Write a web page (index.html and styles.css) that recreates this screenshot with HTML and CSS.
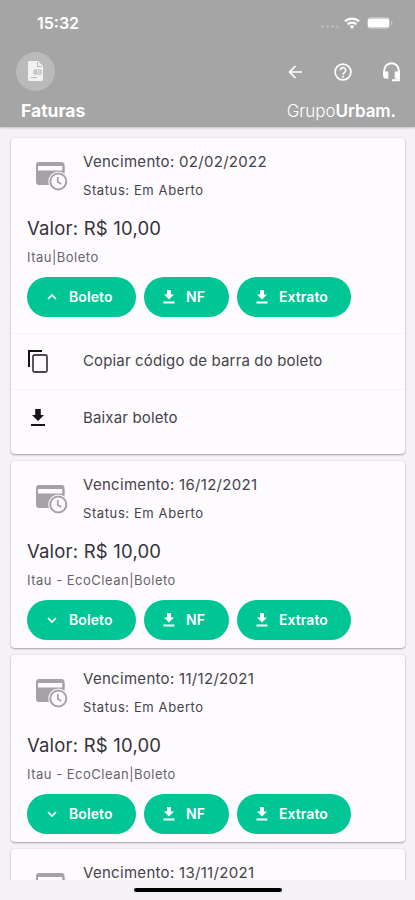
FILE: index.html
```html
<!DOCTYPE html>
<html lang="pt-BR">
<head>
<meta charset="utf-8">
<meta name="viewport" content="width=device-width, initial-scale=1">
<title>Faturas</title>
<link rel="stylesheet" href="styles.css">
</head>
<body>
<svg class="defs" aria-hidden="true">
  <symbol id="download" viewBox="0 0 12 14"><path d="M4 0h4v4.500h3L6 9.500 1 4.500h3zM.5 11.500h11v2H.5z"/></symbol>
  <symbol id="up" viewBox="0 0 10 6"><path d="M1 5l4-4 4 4" fill="none" stroke="currentColor" stroke-width="1.700"/></symbol>
  <symbol id="down" viewBox="0 0 10 6"><path d="M1 1l4 4 4-4" fill="none" stroke="currentColor" stroke-width="1.700"/></symbol>
  <symbol id="pending" viewBox="0 0 32 30"><path fill-rule="evenodd" d="M3 0h22.500a3 3 0 0 1 3 3v20H3a3 3 0 0 1-3-3V3a3 3 0 0 1 3-3zM2 4v4.500H26.500V4z"/><circle cx="22.300" cy="19.500" r="10" class="halo"/><path d="M26.500 4h2v5.500h-2z"/><circle cx="22.300" cy="19.500" r="8" class="ring"/><path d="M21.800 15v5l3.500 2" fill="none" stroke="currentColor" stroke-width="1.700"/></symbol>
</svg>
<div class="screen">
  <header class="header">
    <div class="status-bar">
      <span class="time">15:32</span>
      <span class="dots"><i></i><i></i><i></i><i></i></span>
      <svg class="wifi" viewBox="0 0 16 12"><g fill="none" stroke="currentColor" stroke-width="2.200"><path d="M1 4.400a10 10 0 0 1 14 0M3.700 7.400a6.200 6.200 0 0 1 8.600 0"/></g><path d="M5.600 9.300a3.500 3.500 0 0 1 4.800 0L8 12z"/></svg>
      <svg class="battery" viewBox="0 0 26 12"><rect x=".5" y=".5" width="22" height="11" rx="3" fill="none" stroke="currentColor" opacity=".3"/><rect x="1" y="1.500" width="21" height="9" rx="1.500"/><path d="M24 4c2 .7 2 3.300 0 4z" opacity=".4"/></svg>
    </div>
    <div class="toolbar">
      <span class="avatar"><svg viewBox="0 0 15 20"><path d="M1.500 0H10l5 5v13.500a1.500 1.500 0 0 1-1.500 1.500h-12A1.500 1.500 0 0 1 0 18.500v-17A1.500 1.500 0 0 1 1.500 0z"/><path d="M9.500 1v4.500H14M6 9h7v4H6zM2.500 16.500H9M8 9v4M6 11h7" fill="none" stroke="#b8b8b8"/></svg></span>
      <svg class="back" viewBox="0 0 14 14"><path d="M14 7H1.500M7.500 1l-6 6 6 6" fill="none" stroke="currentColor" stroke-width="1.700"/></svg>
      <svg class="help" viewBox="0 0 18 18"><circle cx="9" cy="9" r="7.900" fill="none" stroke="currentColor" stroke-width="1.700"/><path d="M6.300 7.300a2.700 2.700 0 1 1 4.200 2.200C9.400 10.200 9 10.700 9 11.700" fill="none" stroke="currentColor" stroke-width="1.600"/><circle cx="9" cy="13.800" r="1"/></svg>
      <svg class="headset" viewBox="0 0 17 20"><path d="M1.200 14V8.500a7.300 7.300 0 0 1 14.600 0v9.700H9" fill="none" stroke="currentColor" stroke-width="2"/><path d="M.3 9.500h5v7.300H3a2.700 2.700 0 0 1-2.700-2.700zM11.700 9.500h5v7.300h-5z"/></svg>
    </div>
    <div class="title-row"><h1>Faturas</h1><span class="brand"><span>Grupo</span><b>Urbam.</b></span></div>
  </header>

  <main class="list">
    <article class="card">
      <div class="summary"><svg class="pending"><use href="#pending"/></svg><div><p class="due">Vencimento: 02/02/2022</p><p class="status">Status: Em Aberto</p></div></div>
      <p class="amount">Valor: R$ 10,00</p>
      <p class="bank">Itau|Boleto</p>
      <div class="actions">
        <button class="btn boleto"><svg class="chevron"><use href="#up"/></svg>Boleto</button>
        <button class="btn nf"><svg class="download"><use href="#download"/></svg>NF</button>
        <button class="btn extrato"><svg class="download"><use href="#download"/></svg>Extrato</button>
      </div>
      <ul class="menu">
        <li><svg class="copy" viewBox="0 0 20 23"><path d="M1 17V1h13" fill="none" stroke="#111" stroke-width="2"/><rect x="5" y="5" width="14" height="17" rx="1.500" fill="none" stroke="#49464c" stroke-width="1.800"/></svg><span>Copiar código de barra do boleto</span></li>
        <li><svg class="save" viewBox="0 0 14 17"><path d="M4.200 0h5.600v6H13L7 12 1 6h3.200zM0 15h14v2H0z"/></svg><span>Baixar boleto</span></li>
      </ul>
    </article>

    <article class="card">
      <div class="summary"><svg class="pending"><use href="#pending"/></svg><div><p class="due">Vencimento: 16/12/2021</p><p class="status">Status: Em Aberto</p></div></div>
      <p class="amount">Valor: R$ 10,00</p>
      <p class="bank">Itau - EcoClean|Boleto</p>
      <div class="actions">
        <button class="btn boleto"><svg class="chevron"><use href="#down"/></svg>Boleto</button>
        <button class="btn nf"><svg class="download"><use href="#download"/></svg>NF</button>
        <button class="btn extrato"><svg class="download"><use href="#download"/></svg>Extrato</button>
      </div>
    </article>

    <article class="card">
      <div class="summary"><svg class="pending"><use href="#pending"/></svg><div><p class="due">Vencimento: 11/12/2021</p><p class="status">Status: Em Aberto</p></div></div>
      <p class="amount">Valor: R$ 10,00</p>
      <p class="bank">Itau - EcoClean|Boleto</p>
      <div class="actions">
        <button class="btn boleto"><svg class="chevron"><use href="#down"/></svg>Boleto</button>
        <button class="btn nf"><svg class="download"><use href="#download"/></svg>NF</button>
        <button class="btn extrato"><svg class="download"><use href="#download"/></svg>Extrato</button>
      </div>
    </article>

    <article class="card">
      <div class="summary"><svg class="pending"><use href="#pending"/></svg><div><p class="due">Vencimento: 13/11/2021</p></div></div>
    </article>
  </main>
  <footer class="home"><span></span></footer>
</div>
</body>
</html>
```
FILE: styles.css
```css
* { box-sizing: border-box; }
body { margin: 0; font-family: Inter, "Liberation Sans", sans-serif; color: #454249; background: #f4f2f7; }
h1, p, ul { margin: 0; padding: 0; }
svg { display: block; flex: none; fill: currentColor; }
.defs { display: none; }
.screen { height: 900px; display: flex; flex-direction: column; overflow: hidden; }

.header { height: 127px; flex: none; background: #a5a5a5; color: #fff; box-shadow: 0 1px 2px rgba(0,0,0,.2); }
.status-bar { height: 46px; display: flex; align-items: center; padding: 0 22px 0 37px; }
.time { font-size: 16px; font-weight: 600; line-height: 20px; }
.dots { display: flex; gap: 2px; margin: 7px 5px 0 auto; }
.dots i { width: 3px; height: 3px; border-radius: 50%; background: #b9b9b9; }
.wifi { width: 16px; height: 12px; margin-right: 7px; }
.battery { width: 26px; height: 12px; }
.toolbar { height: 50px; display: flex; align-items: center; padding: 2px 15px 0 16px; }
.avatar { width: 39px; height: 39px; border-radius: 50%; background: #bababa; display: grid; place-items: center; margin: -2px auto 0 0; }
.avatar svg { width: 15px; height: 20px; color: #f1f1f1; }
.back { width: 14px; height: 14px; margin-right: 32px; }
.help { width: 18px; height: 18px; margin-right: 31px; }
.headset { width: 17px; height: 20px; }
.title-row { height: 30px; display: flex; justify-content: space-between; align-items: center; padding: 0 19px 0 21px; }
h1 { font-size: 17.500px; line-height: 24px; font-weight: 700; }
.brand { font-size: 17px; line-height: 22px; letter-spacing: -.05px; font-weight: 300; }
.brand b { font-weight: 600; }

.list { flex: 1; min-height: 0; overflow: hidden; padding: 11px 10px 0 11px; display: flex; flex-direction: column; gap: 7px; }
.card { flex: none; background: #fefbff; border-radius: 4px; padding: 14px 0 8px 16px; box-shadow: 0 1px 2px rgba(0,0,0,.32), 0 0 2px rgba(0,0,0,.1); }
.summary { display: flex; height: 46px; }
.pending { width: 32px; height: 30px; margin: 10px 15px 0 9px; color: #a4a2a5; }
.halo { fill: #fefbff; }
.ring { fill: #fefbff; stroke: currentColor; stroke-width: 2px; }
.due { font-size: 15px; line-height: 20px; letter-spacing: .3px; }
.status { margin-top: 10px; font-size: 13px; line-height: 16px; letter-spacing: .6px; }
.amount { margin-top: 18px; font-size: 18.500px; line-height: 24px; letter-spacing: .2px; color: #353239; }
.bank { margin-top: 9px; font-size: 13px; line-height: 16px; letter-spacing: .5px; color: #66636a; }
.actions { display: flex; gap: 8px; margin-top: 12px; }
.btn { height: 40px; border: 0; border-radius: 20px; padding: 0 0 0 19px; display: flex; align-items: center; background: #00c594; color: #fff; font: 600 14px/20px Inter, "Liberation Sans", sans-serif; letter-spacing: .08px; }
.boleto { width: 109px; }
.nf { width: 85px; }
.extrato { width: 114px; }
.chevron { width: 10px; height: 6px; margin: 0 12px 0 1px; }
.download { width: 12px; height: 14px; margin-right: 11px; }
.menu { list-style: none; margin: 16px 0 0 -16px; }
.menu li { height: 56px; border-top: 1px solid #f4f1f6; display: flex; align-items: center; padding: 0 0 1px 16px; font-size: 15px; line-height: 20px; letter-spacing: .15px; }
.menu li:last-child { height: 57px; }
.copy { width: 20px; height: 23px; margin: 0 35px 0 1px; }
.save { width: 14px; height: 17px; margin: 0 38px 0 4px; color: #17141b; }

.home { height: 20px; flex: none; display: flex; justify-content: center; padding-top: 8px; background: #f4f2f7; }
.home span { width: 148px; height: 4px; border-radius: 2px; background: #000; }
```
